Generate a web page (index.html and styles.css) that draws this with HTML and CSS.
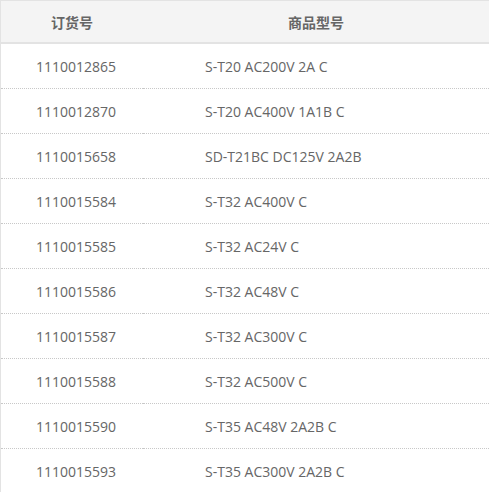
FILE: index.html
```html
<!DOCTYPE html>
<html lang="zh">
<head>
<meta charset="utf-8">
<link rel="stylesheet" href="styles.css">
</head>
<body>
<table class="parts">
  <thead>
    <tr><th class="c1">订货号</th><th class="c2">商品型号</th></tr>
  </thead>
  <tbody>
    <tr><td class="c1">1110012865</td><td class="c2">S-T20 AC200V 2A C</td></tr>
    <tr><td class="c1">1110012870</td><td class="c2">S-T20 AC400V 1A1B C</td></tr>
    <tr><td class="c1">1110015658</td><td class="c2">SD-T21BC DC125V 2A2B</td></tr>
    <tr><td class="c1">1110015584</td><td class="c2">S-T32 AC400V C</td></tr>
    <tr><td class="c1">1110015585</td><td class="c2">S-T32 AC24V C</td></tr>
    <tr><td class="c1">1110015586</td><td class="c2">S-T32 AC48V C</td></tr>
    <tr><td class="c1">1110015587</td><td class="c2">S-T32 AC300V C</td></tr>
    <tr><td class="c1">1110015588</td><td class="c2">S-T32 AC500V C</td></tr>
    <tr><td class="c1">1110015590</td><td class="c2">S-T35 AC48V 2A2B C</td></tr>
    <tr><td class="c1">1110015593</td><td class="c2">S-T35 AC300V 2A2B C</td></tr>
  </tbody>
</table>
</body>
</html>
```

FILE: styles.css
```css
html, body {
  margin: 0;
  padding: 0;
  background: #fff;
}
.parts {
  width: 489px;
  border-collapse: separate;
  border-spacing: 0;
  table-layout: fixed;
  border-left: 1px solid #e3e3e3;
  border-top: 1px solid #e3e3e3;
  font-family: "Open Sans", "Noto Sans CJK SC", sans-serif;
  font-size: 14px;
  color: #666;
}
.parts th {
  height: 41px;
  padding: 0;
  background: #f4f4f4;
  border-bottom: 2px solid #e3e3e3;
  font-family: "Noto Sans CJK SC", sans-serif;
  font-size: 14px;
  font-weight: bold;
  color: #666;
  text-align: center;
}
.parts th.c1 { width: 142px; }
.parts td {
  height: 44px;
  padding: 0;
  border-bottom: 1px dotted #c8c8c8;
  text-align: left;
  white-space: nowrap;
}
.parts tbody tr:last-child td { border-bottom: none; }
.parts td.c1 { padding-left: 35px; }
.parts td.c2 { padding-left: 62px; }
```
